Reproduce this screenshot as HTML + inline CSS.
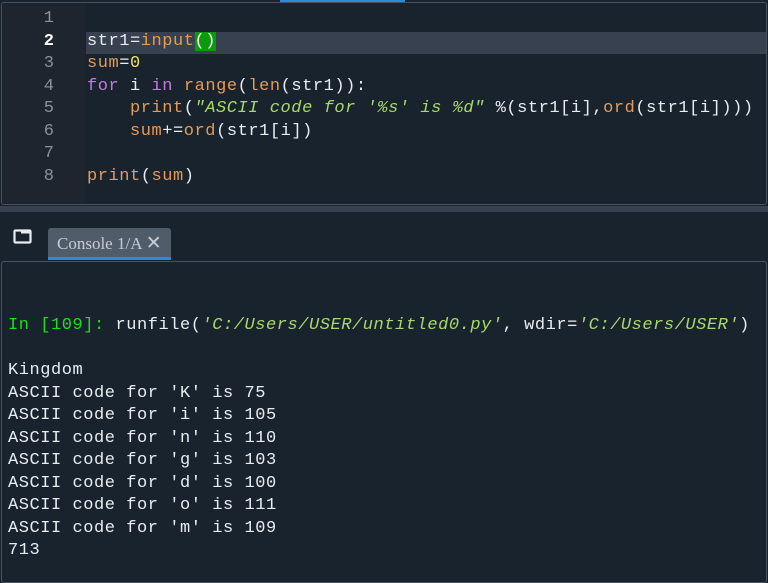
<!DOCTYPE html>
<html><head><style>
body{margin:0;width:768px;height:578px;background:#19232d;overflow:hidden;position:relative;font-family:"Liberation Mono",monospace;}
.ed{position:absolute;left:1px;top:2px;width:764px;height:201px;border:1px solid #4a5260;border-radius:3px;background:#19232d;}
.gut{position:absolute;left:1px;top:1px;width:82px;height:199px;background:#1e252e;}
.ln{position:absolute;right:30px;width:40px;text-align:right;color:#8a919a;font-size:17px;}
.code{position:absolute;left:87px;font-size:17px;letter-spacing:0.55px;color:#e8ecf0;white-space:pre;line-height:22px;}
.o{color:#e69a55}.p{color:#c678dd}.y{color:#f0e060}.g{color:#a6d96a;font-style:italic}.gr{color:#00ff00}
.cur{position:absolute;left:84px;top:29px;width:680px;height:22px;background:#37414f;}
.sep{position:absolute;left:0;top:206px;width:768px;height:6px;background:#37414f;}
.tab{position:absolute;left:48px;top:228px;width:123px;height:32px;background:#505c69;border-radius:3px 3px 0 0;border-bottom:3px solid #2a8cdc;color:#c9ccd0;font-family:"Liberation Serif",serif;font-size:17px;line-height:30px;padding-left:9px;box-sizing:border-box;}
.con{position:absolute;left:1px;top:261px;width:764px;height:320px;border:1px solid #4a5260;border-radius:3px;}
.out{position:absolute;left:8px;top:315px;font-size:17px;letter-spacing:0.55px;color:#e8ecf0;white-space:pre;line-height:22.5px;}
</style></head><body>
<div style="position:absolute;left:280px;top:0;width:125px;height:2px;background:#2a8cdc"></div>
<div class="ed"><div class="gut"></div><div class="cur"></div></div>
<div class="ln" style="left:14px;top:8px;line-height:22.5px">1<br><b style="color:#fff">2</b><br>3<br>4<br>5<br>6<br>7<br>8</div>
<div class="code" style="top:8px;line-height:22.5px">
<span>str1=</span><span class="o">input</span><span style="background:#0a9a0a;color:#fff">()</span>
<span class="o">sum</span>=<span class="y">0</span>
<span class="p">for</span> i <span class="p">in</span> <span class="o">range</span>(<span class="o">len</span>(str1)):
    <span class="o">print</span>(<span class="g">"ASCII code for '%s' is %d"</span> %(str1[i],<span class="o">ord</span>(str1[i])))
    <span class="o">sum</span>+=<span class="o">ord</span>(str1[i])

<span class="o">print</span>(<span class="o">sum</span>)</div>
<div class="sep"></div>
<svg style="position:absolute;left:13px;top:229px" width="20" height="16"><rect x="1.5" y="1.5" width="16" height="12" rx="1" fill="none" stroke="#e8ecf0" stroke-width="2.2"/><rect x="8" y="1.5" width="9.5" height="3" fill="#e8ecf0"/></svg>
<div class="tab">Console 1/A <span style="font-family:'DejaVu Sans',sans-serif;font-size:19px">✕</span></div>
<div class="con"></div>
<div class="out"><span style="color:#1ae01a">In [109]:</span> runfile(<span class="g">'C:/Users/USER/untitled0.py'</span>, wdir=<span class="g">'C:/Users/USER'</span>)

Kingdom
ASCII code for 'K' is 75
ASCII code for 'i' is 105
ASCII code for 'n' is 110
ASCII code for 'g' is 103
ASCII code for 'd' is 100
ASCII code for 'o' is 111
ASCII code for 'm' is 109
713</div>
</body></html>
